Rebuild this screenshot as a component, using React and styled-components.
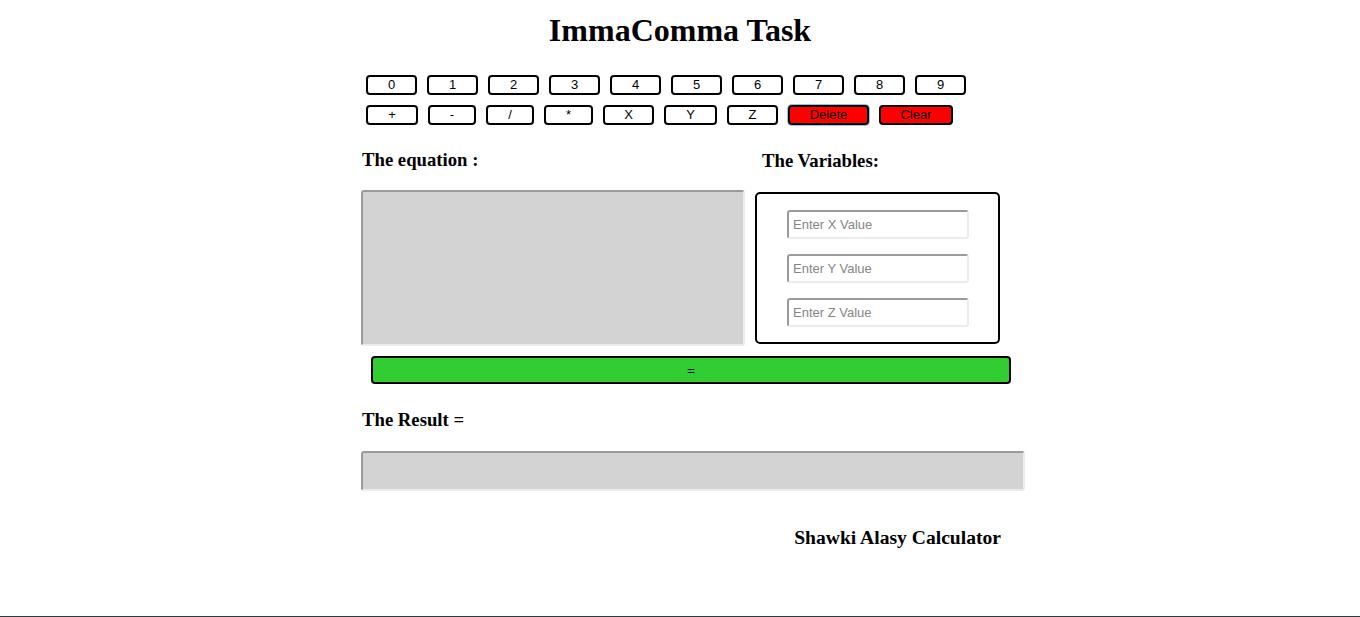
import styled, { createGlobalStyle } from "styled-components";

const GlobalStyle = createGlobalStyle`
    *{box-sizing: border-box;}
    body{
        margin: 0;
        background: #ffffff;
        font-family: "Liberation Serif", "Times New Roman", serif;
        color: #000000;
    }
`

const Page = styled.div`
    min-height: 100vh;
    border-bottom: 1px solid #2b3a44;
    display: flex;
    flex-direction: column;
`
const Title = styled.h1`
    margin: 12px 0 0;
    font-size: 32px;
    line-height: 36px;
    font-weight: bold;
    text-align: center;
`
const Main = styled.div`
    width: 664px;
    margin-left: 361px;
    display: flex;
    flex-direction: column;
`
const KeyRow = styled.div`
    display: flex;
    gap: 10px;
    padding-left: 5px;
    margin-top: ${props=>props.top||"10px"};
`
const Key = styled.button`
    width: ${props=>props.width||"51px"};
    height: 20px;
    padding: 0;
    flex-shrink: 0;
    border: 2px solid #000000;
    border-radius: 4px;
    background-color: ${props=>props.danger ? "#ff0000" : "#ffffff"};
    font-family: "Liberation Sans", Arial, sans-serif;
    font-size: 13px;
    line-height: 16px;
    color: #000000;
    cursor: pointer;
    box-shadow: ${props=>props.focused ? "0 0 0 1px #9cbcec" : "none"};
`
const Columns = styled.div`
    display: flex;
    gap: 10px;
    margin-top: 24px;
`
const Column = styled.div`
    display: flex;
    flex-direction: column;
`
const Label = styled.h3`
    margin: ${props=>props.margin||"0"};
    padding-left: ${props=>props.indent||"1px"};
    font-size: 18.72px;
    line-height: 22px;
    font-weight: bold;
`
const GrayField = styled.div`
    width: ${props=>props.width||"100%"};
    height: ${props=>props.height};
    margin-top: ${props=>props.top||"19px"};
    background-color: #d3d3d3;
    border-width: 2px;
    border-style: solid;
    border-color: #9a9a9a #ececec #ececec #9a9a9a;
    border-radius: 3px;
`
const VarBox = styled.div`
    width: 245px;
    height: 152px;
    margin-top: 20px;
    border: 2px solid #000000;
    border-radius: 5px;
    padding: 16px 0 0 30px;
    display: flex;
    flex-direction: column;
    gap: 15px;
`
const VarInput = styled.input`
    width: 182px;
    height: 29px;
    padding: 0 4px;
    background: #ffffff;
    border-width: 2px;
    border-style: solid;
    border-color: #9a9a9a #ececec #ececec #9a9a9a;
    border-radius: 3px;
    font-family: "Liberation Sans", Arial, sans-serif;
    font-size: 13px;
    outline: none;
    &::placeholder{color: #858585;}
`
const EqualButton = styled.button`
    width: 640px;
    height: 28px;
    margin: 10px 0 0 10px;
    background-color: #32cd32;
    border: 2px solid #000000;
    border-radius: 4px;
    font-family: "Liberation Sans", Arial, sans-serif;
    font-size: 13px;
    color: #000000;
    cursor: pointer;
`
const Signature = styled.p`
    margin: 36px 0 0;
    padding-right: 24px;
    text-align: right;
    font-size: 19.6px;
    line-height: 22px;
    font-weight: bold;
`

const digits = ["0","1","2","3","4","5","6","7","8","9"]
const operators = [
    {label:"+", width:"52px"},
    {label:"-", width:"48px"},
    {label:"/", width:"48px"},
    {label:"*", width:"49px"},
    {label:"X", width:"51px"},
    {label:"Y", width:"53px"},
    {label:"Z", width:"51px"},
]

const App = () =>{
    return (
        <>
            <GlobalStyle/>
            <Page>
                <Title>ImmaComma Task</Title>
                <Main>
                    <KeyRow top="27px">
                        {digits.map((value)=>{
                            return <Key key={"digit"+value}>{value}</Key>
                        })}
                    </KeyRow>
                    <KeyRow>
                        {operators.map((op)=>{
                            return <Key key={"op"+op.label} width={op.width}>{op.label}</Key>
                        })}
                        <Key danger focused width="81px">Delete</Key>
                        <Key danger width="74px">Clear</Key>
                    </KeyRow>
                    <Columns>
                        <Column>
                            <Label>The equation :</Label>
                            <GrayField width="384px" height="156px"/>
                        </Column>
                        <Column>
                            <Label margin="1px 0 0" indent="7px">The Variables:</Label>
                            <VarBox>
                                <VarInput placeholder="Enter X Value"/>
                                <VarInput placeholder="Enter Y Value"/>
                                <VarInput placeholder="Enter Z Value"/>
                            </VarBox>
                        </Column>
                    </Columns>
                    <EqualButton>=</EqualButton>
                    <Label margin="25px 0 0">The Result =</Label>
                    <GrayField height="40px" top="20px"/>
                    <Signature>Shawki Alasy Calculator</Signature>
                </Main>
            </Page>
        </>
    )
}
export default App;
